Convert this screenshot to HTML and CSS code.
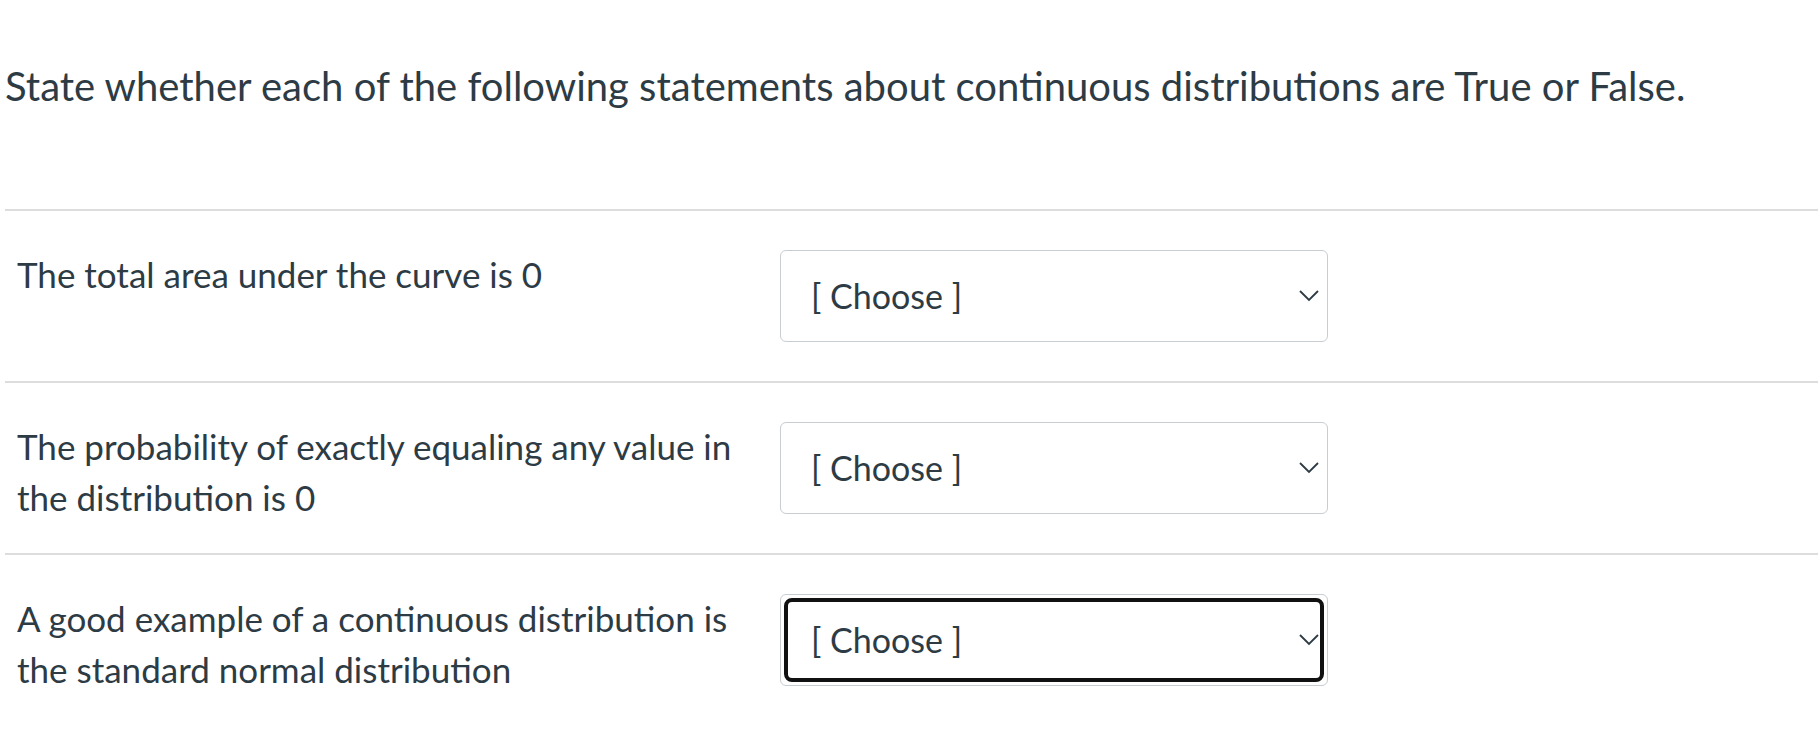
FILE: index.html
```html
<!DOCTYPE html>
<html lang="en">
<head>
<meta charset="utf-8">
<title>Quiz question</title>
<link rel="stylesheet" href="styles.css">
</head>
<body>
<div class="question">
  <p class="prompt">State whether each of the following statements about continuous distributions are True or False.</p>
  <div class="answers">
    <div class="row">
      <div class="label">The total area under the curve is 0</div>
      <div class="select">
        <div class="select-inner">
          <span class="value">[ Choose ]</span>
          <svg class="chev" width="20" height="12" viewBox="0 0 20 12"><path d="M1 1 L10 10 L19 1" fill="none" stroke="#2D3B45" stroke-width="1.8"/></svg>
        </div>
      </div>
    </div>
    <div class="row">
      <div class="label">The probability of exactly equaling any value in the distribution is 0</div>
      <div class="select">
        <div class="select-inner">
          <span class="value">[ Choose ]</span>
          <svg class="chev" width="20" height="12" viewBox="0 0 20 12"><path d="M1 1 L10 10 L19 1" fill="none" stroke="#2D3B45" stroke-width="1.8"/></svg>
        </div>
      </div>
    </div>
    <div class="row">
      <div class="label">A good example of a continuous distribution is the standard normal distribution</div>
      <div class="select">
        <div class="select-inner focused">
          <span class="value">[ Choose ]</span>
          <svg class="chev" width="20" height="12" viewBox="0 0 20 12"><path d="M1 1 L10 10 L19 1" fill="none" stroke="#2D3B45" stroke-width="1.8"/></svg>
        </div>
      </div>
    </div>
  </div>
</div>
</body>
</html>
```
FILE: styles.css
```css
html, body {
  margin: 0;
  padding: 0;
  background: #ffffff;
}

body {
  font-family: Lato, "Open Sans", "Liberation Sans", sans-serif;
  color: #2D3B45;
}

.question {
  padding-left: 5px;
}

.prompt {
  margin: 0;
  padding-top: 56px;
  font-size: 40px;
  line-height: 60px;
  height: 209px;
  box-sizing: border-box;
}

.answers {
  display: flex;
  flex-direction: column;
}

.row {
  display: flex;
  align-items: flex-start;
  border-top: 2px solid #dddddd;
  padding: 34px 0 30px 12px;
  min-height: 172px;
  box-sizing: border-box;
}

.label {
  width: 740px;
  flex: none;
  margin-right: 23px;
  padding-top: 4px;
  font-size: 35px;
  line-height: 51px;
}

.select {
  width: 548px;
  height: 92px;
  margin-top: 5px;
  box-sizing: border-box;
  border: 1px solid #C7CDD1;
  border-radius: 6px;
  padding: 3px;
  flex: none;
}

.select-inner {
  height: 100%;
  box-sizing: border-box;
  border: 4px solid transparent;
  border-radius: 8px;
  display: flex;
  align-items: center;
  justify-content: space-between;
  padding: 0 1px 0 23px;
}

.select-inner.focused {
  border-color: #111111;
}

.value {
  font-size: 34px;
  line-height: 42px;
}

.chev {
  display: block;
  flex: none;
}
```
